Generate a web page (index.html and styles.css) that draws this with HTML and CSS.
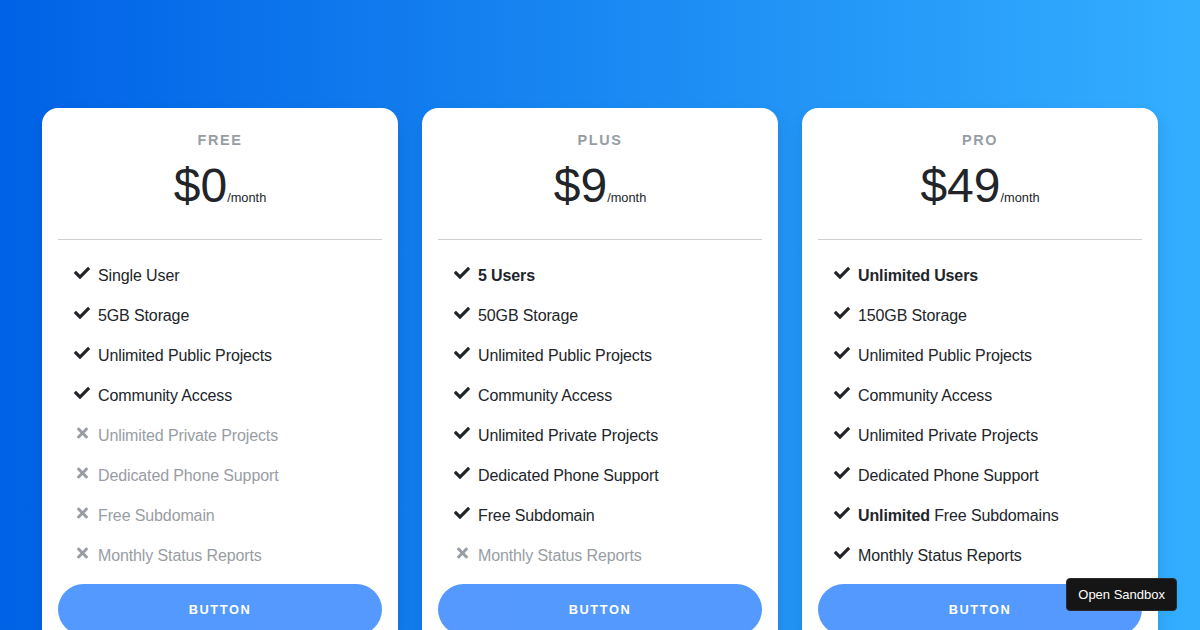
FILE: index.html
```html
<!DOCTYPE html>
<html lang="en">
<head>
<meta charset="utf-8">
<title>Pricing</title>
<link rel="stylesheet" href="styles.css">
</head>
<body>
<section class="pricing">
  <div class="row">
    <div class="card">
      <h5 class="card-title">Free</h5>
      <h6 class="card-price">$0<span class="period">/month</span></h6>
      <hr>
      <ul class="features">
        <li><span class="ico"><svg class="check" viewBox="0 0 512 512"><path d="M173.898 439.404l-166.4-166.4c-9.997-9.997-9.997-26.206 0-36.204l36.203-36.204c9.997-9.998 26.207-9.998 36.204 0L192 312.69 432.095 72.596c9.997-9.997 26.207-9.997 36.204 0l36.203 36.204c9.997 9.997 9.997 26.206 0 36.204l-294.4 294.401c-9.998 9.997-26.207 9.997-36.204-.001z"/></svg></span>Single User</li>
        <li><span class="ico"><svg class="check" viewBox="0 0 512 512"><path d="M173.898 439.404l-166.4-166.4c-9.997-9.997-9.997-26.206 0-36.204l36.203-36.204c9.997-9.998 26.207-9.998 36.204 0L192 312.69 432.095 72.596c9.997-9.997 26.207-9.997 36.204 0l36.203 36.204c9.997 9.997 9.997 26.206 0 36.204l-294.4 294.401c-9.998 9.997-26.207 9.997-36.204-.001z"/></svg></span>5GB Storage</li>
        <li><span class="ico"><svg class="check" viewBox="0 0 512 512"><path d="M173.898 439.404l-166.4-166.4c-9.997-9.997-9.997-26.206 0-36.204l36.203-36.204c9.997-9.998 26.207-9.998 36.204 0L192 312.69 432.095 72.596c9.997-9.997 26.207-9.997 36.204 0l36.203 36.204c9.997 9.997 9.997 26.206 0 36.204l-294.4 294.401c-9.998 9.997-26.207 9.997-36.204-.001z"/></svg></span>Unlimited Public Projects</li>
        <li><span class="ico"><svg class="check" viewBox="0 0 512 512"><path d="M173.898 439.404l-166.4-166.4c-9.997-9.997-9.997-26.206 0-36.204l36.203-36.204c9.997-9.998 26.207-9.998 36.204 0L192 312.69 432.095 72.596c9.997-9.997 26.207-9.997 36.204 0l36.203 36.204c9.997 9.997 9.997 26.206 0 36.204l-294.4 294.401c-9.998 9.997-26.207 9.997-36.204-.001z"/></svg></span>Community Access</li>
        <li class="muted"><span class="ico"><svg class="times" viewBox="0 0 352 512"><path d="M242.72 256l100.07-100.07c12.28-12.28 12.28-32.19 0-44.48l-22.24-22.24c-12.28-12.28-32.19-12.28-44.48 0L176 189.28 75.93 89.21c-12.28-12.28-32.19-12.28-44.48 0L9.21 111.45c-12.28 12.28-12.28 32.19 0 44.48L109.28 256 9.21 356.07c-12.28 12.28-12.28 32.19 0 44.48l22.24 22.24c12.28 12.28 32.2 12.28 44.48 0L176 322.72l100.07 100.07c12.28 12.28 32.2 12.28 44.48 0l22.24-22.24c12.28-12.28 12.28-32.19 0-44.48L242.72 256z"/></svg></span>Unlimited Private Projects</li>
        <li class="muted"><span class="ico"><svg class="times" viewBox="0 0 352 512"><path d="M242.72 256l100.07-100.07c12.28-12.28 12.28-32.19 0-44.48l-22.24-22.24c-12.28-12.28-32.19-12.28-44.48 0L176 189.28 75.93 89.21c-12.28-12.28-32.19-12.28-44.48 0L9.21 111.45c-12.28 12.28-12.28 32.19 0 44.48L109.28 256 9.21 356.07c-12.28 12.28-12.28 32.19 0 44.48l22.24 22.24c12.28 12.28 32.2 12.28 44.48 0L176 322.72l100.07 100.07c12.28 12.28 32.2 12.28 44.48 0l22.24-22.24c12.28-12.28 12.28-32.19 0-44.48L242.72 256z"/></svg></span>Dedicated Phone Support</li>
        <li class="muted"><span class="ico"><svg class="times" viewBox="0 0 352 512"><path d="M242.72 256l100.07-100.07c12.28-12.28 12.28-32.19 0-44.48l-22.24-22.24c-12.28-12.28-32.19-12.28-44.48 0L176 189.28 75.93 89.21c-12.28-12.28-32.19-12.28-44.48 0L9.21 111.45c-12.28 12.28-12.28 32.19 0 44.48L109.28 256 9.21 356.07c-12.28 12.28-12.28 32.19 0 44.48l22.24 22.24c12.28 12.28 32.2 12.28 44.48 0L176 322.72l100.07 100.07c12.28 12.28 32.2 12.28 44.48 0l22.24-22.24c12.28-12.28 12.28-32.19 0-44.48L242.72 256z"/></svg></span>Free Subdomain</li>
        <li class="muted"><span class="ico"><svg class="times" viewBox="0 0 352 512"><path d="M242.72 256l100.07-100.07c12.28-12.28 12.28-32.19 0-44.48l-22.24-22.24c-12.28-12.28-32.19-12.28-44.48 0L176 189.28 75.93 89.21c-12.28-12.28-32.19-12.28-44.48 0L9.21 111.45c-12.28 12.28-12.28 32.19 0 44.48L109.28 256 9.21 356.07c-12.28 12.28-12.28 32.19 0 44.48l22.24 22.24c12.28 12.28 32.2 12.28 44.48 0L176 322.72l100.07 100.07c12.28 12.28 32.2 12.28 44.48 0l22.24-22.24c12.28-12.28 12.28-32.19 0-44.48L242.72 256z"/></svg></span>Monthly Status Reports</li>
      </ul>
      <a class="btn" href="#">Button</a>
    </div>

    <div class="card">
      <h5 class="card-title">Plus</h5>
      <h6 class="card-price">$9<span class="period">/month</span></h6>
      <hr>
      <ul class="features">
        <li><span class="ico"><svg class="check" viewBox="0 0 512 512"><path d="M173.898 439.404l-166.4-166.4c-9.997-9.997-9.997-26.206 0-36.204l36.203-36.204c9.997-9.998 26.207-9.998 36.204 0L192 312.69 432.095 72.596c9.997-9.997 26.207-9.997 36.204 0l36.203 36.204c9.997 9.997 9.997 26.206 0 36.204l-294.4 294.401c-9.998 9.997-26.207 9.997-36.204-.001z"/></svg></span><strong>5 Users</strong></li>
        <li><span class="ico"><svg class="check" viewBox="0 0 512 512"><path d="M173.898 439.404l-166.4-166.4c-9.997-9.997-9.997-26.206 0-36.204l36.203-36.204c9.997-9.998 26.207-9.998 36.204 0L192 312.69 432.095 72.596c9.997-9.997 26.207-9.997 36.204 0l36.203 36.204c9.997 9.997 9.997 26.206 0 36.204l-294.4 294.401c-9.998 9.997-26.207 9.997-36.204-.001z"/></svg></span>50GB Storage</li>
        <li><span class="ico"><svg class="check" viewBox="0 0 512 512"><path d="M173.898 439.404l-166.4-166.4c-9.997-9.997-9.997-26.206 0-36.204l36.203-36.204c9.997-9.998 26.207-9.998 36.204 0L192 312.69 432.095 72.596c9.997-9.997 26.207-9.997 36.204 0l36.203 36.204c9.997 9.997 9.997 26.206 0 36.204l-294.4 294.401c-9.998 9.997-26.207 9.997-36.204-.001z"/></svg></span>Unlimited Public Projects</li>
        <li><span class="ico"><svg class="check" viewBox="0 0 512 512"><path d="M173.898 439.404l-166.4-166.4c-9.997-9.997-9.997-26.206 0-36.204l36.203-36.204c9.997-9.998 26.207-9.998 36.204 0L192 312.69 432.095 72.596c9.997-9.997 26.207-9.997 36.204 0l36.203 36.204c9.997 9.997 9.997 26.206 0 36.204l-294.4 294.401c-9.998 9.997-26.207 9.997-36.204-.001z"/></svg></span>Community Access</li>
        <li><span class="ico"><svg class="check" viewBox="0 0 512 512"><path d="M173.898 439.404l-166.4-166.4c-9.997-9.997-9.997-26.206 0-36.204l36.203-36.204c9.997-9.998 26.207-9.998 36.204 0L192 312.69 432.095 72.596c9.997-9.997 26.207-9.997 36.204 0l36.203 36.204c9.997 9.997 9.997 26.206 0 36.204l-294.4 294.401c-9.998 9.997-26.207 9.997-36.204-.001z"/></svg></span>Unlimited Private Projects</li>
        <li><span class="ico"><svg class="check" viewBox="0 0 512 512"><path d="M173.898 439.404l-166.4-166.4c-9.997-9.997-9.997-26.206 0-36.204l36.203-36.204c9.997-9.998 26.207-9.998 36.204 0L192 312.69 432.095 72.596c9.997-9.997 26.207-9.997 36.204 0l36.203 36.204c9.997 9.997 9.997 26.206 0 36.204l-294.4 294.401c-9.998 9.997-26.207 9.997-36.204-.001z"/></svg></span>Dedicated Phone Support</li>
        <li><span class="ico"><svg class="check" viewBox="0 0 512 512"><path d="M173.898 439.404l-166.4-166.4c-9.997-9.997-9.997-26.206 0-36.204l36.203-36.204c9.997-9.998 26.207-9.998 36.204 0L192 312.69 432.095 72.596c9.997-9.997 26.207-9.997 36.204 0l36.203 36.204c9.997 9.997 9.997 26.206 0 36.204l-294.4 294.401c-9.998 9.997-26.207 9.997-36.204-.001z"/></svg></span>Free Subdomain</li>
        <li class="muted"><span class="ico"><svg class="times" viewBox="0 0 352 512"><path d="M242.72 256l100.07-100.07c12.28-12.28 12.28-32.19 0-44.48l-22.24-22.24c-12.28-12.28-32.19-12.28-44.48 0L176 189.28 75.93 89.21c-12.28-12.28-32.19-12.28-44.48 0L9.21 111.45c-12.28 12.28-12.28 32.19 0 44.48L109.28 256 9.21 356.07c-12.28 12.28-12.28 32.19 0 44.48l22.24 22.24c12.28 12.28 32.2 12.28 44.48 0L176 322.72l100.07 100.07c12.28 12.28 32.2 12.28 44.48 0l22.24-22.24c12.28-12.28 12.28-32.19 0-44.48L242.72 256z"/></svg></span>Monthly Status Reports</li>
      </ul>
      <a class="btn" href="#">Button</a>
    </div>

    <div class="card">
      <h5 class="card-title">Pro</h5>
      <h6 class="card-price">$49<span class="period">/month</span></h6>
      <hr>
      <ul class="features">
        <li><span class="ico"><svg class="check" viewBox="0 0 512 512"><path d="M173.898 439.404l-166.4-166.4c-9.997-9.997-9.997-26.206 0-36.204l36.203-36.204c9.997-9.998 26.207-9.998 36.204 0L192 312.69 432.095 72.596c9.997-9.997 26.207-9.997 36.204 0l36.203 36.204c9.997 9.997 9.997 26.206 0 36.204l-294.4 294.401c-9.998 9.997-26.207 9.997-36.204-.001z"/></svg></span><strong>Unlimited Users</strong></li>
        <li><span class="ico"><svg class="check" viewBox="0 0 512 512"><path d="M173.898 439.404l-166.4-166.4c-9.997-9.997-9.997-26.206 0-36.204l36.203-36.204c9.997-9.998 26.207-9.998 36.204 0L192 312.69 432.095 72.596c9.997-9.997 26.207-9.997 36.204 0l36.203 36.204c9.997 9.997 9.997 26.206 0 36.204l-294.4 294.401c-9.998 9.997-26.207 9.997-36.204-.001z"/></svg></span>150GB Storage</li>
        <li><span class="ico"><svg class="check" viewBox="0 0 512 512"><path d="M173.898 439.404l-166.4-166.4c-9.997-9.997-9.997-26.206 0-36.204l36.203-36.204c9.997-9.998 26.207-9.998 36.204 0L192 312.69 432.095 72.596c9.997-9.997 26.207-9.997 36.204 0l36.203 36.204c9.997 9.997 9.997 26.206 0 36.204l-294.4 294.401c-9.998 9.997-26.207 9.997-36.204-.001z"/></svg></span>Unlimited Public Projects</li>
        <li><span class="ico"><svg class="check" viewBox="0 0 512 512"><path d="M173.898 439.404l-166.4-166.4c-9.997-9.997-9.997-26.206 0-36.204l36.203-36.204c9.997-9.998 26.207-9.998 36.204 0L192 312.69 432.095 72.596c9.997-9.997 26.207-9.997 36.204 0l36.203 36.204c9.997 9.997 9.997 26.206 0 36.204l-294.4 294.401c-9.998 9.997-26.207 9.997-36.204-.001z"/></svg></span>Community Access</li>
        <li><span class="ico"><svg class="check" viewBox="0 0 512 512"><path d="M173.898 439.404l-166.4-166.4c-9.997-9.997-9.997-26.206 0-36.204l36.203-36.204c9.997-9.998 26.207-9.998 36.204 0L192 312.69 432.095 72.596c9.997-9.997 26.207-9.997 36.204 0l36.203 36.204c9.997 9.997 9.997 26.206 0 36.204l-294.4 294.401c-9.998 9.997-26.207 9.997-36.204-.001z"/></svg></span>Unlimited Private Projects</li>
        <li><span class="ico"><svg class="check" viewBox="0 0 512 512"><path d="M173.898 439.404l-166.4-166.4c-9.997-9.997-9.997-26.206 0-36.204l36.203-36.204c9.997-9.998 26.207-9.998 36.204 0L192 312.69 432.095 72.596c9.997-9.997 26.207-9.997 36.204 0l36.203 36.204c9.997 9.997 9.997 26.206 0 36.204l-294.4 294.401c-9.998 9.997-26.207 9.997-36.204-.001z"/></svg></span>Dedicated Phone Support</li>
        <li><span class="ico"><svg class="check" viewBox="0 0 512 512"><path d="M173.898 439.404l-166.4-166.4c-9.997-9.997-9.997-26.206 0-36.204l36.203-36.204c9.997-9.998 26.207-9.998 36.204 0L192 312.69 432.095 72.596c9.997-9.997 26.207-9.997 36.204 0l36.203 36.204c9.997 9.997 9.997 26.206 0 36.204l-294.4 294.401c-9.998 9.997-26.207 9.997-36.204-.001z"/></svg></span><strong>Unlimited</strong> Free Subdomains</li>
        <li><span class="ico"><svg class="check" viewBox="0 0 512 512"><path d="M173.898 439.404l-166.4-166.4c-9.997-9.997-9.997-26.206 0-36.204l36.203-36.204c9.997-9.998 26.207-9.998 36.204 0L192 312.69 432.095 72.596c9.997-9.997 26.207-9.997 36.204 0l36.203 36.204c9.997 9.997 9.997 26.206 0 36.204l-294.4 294.401c-9.998 9.997-26.207 9.997-36.204-.001z"/></svg></span>Monthly Status Reports</li>
      </ul>
      <a class="btn" href="#">Button</a>
    </div>
  </div>
</section>
<a class="sandbox" href="#">Open Sandbox</a>
</body>
</html>
```

FILE: styles.css
```css
* { box-sizing: border-box; }

html, body {
  margin: 0;
  height: 100%;
  overflow: hidden;
}

body {
  font-family: "Liberation Sans", Arial, Helvetica, sans-serif;
  font-size: 16px;
  line-height: 1.5;
  color: #212529;
  background: linear-gradient(to right, #0062e6, #33aeff);
}

.pricing {
  padding-top: 108px;
}

.row {
  width: 1116px;
  margin: 0 auto;
  display: grid;
  grid-template-columns: repeat(3, 1fr);
  gap: 24px;
}

.card {
  background: #fff;
  border-radius: 16px;
  padding: 16px;
  box-shadow: 0 8px 16px 0 rgba(0, 0, 0, 0.1);
  display: flex;
  flex-direction: column;
}

.card-title {
  margin: 8px 0;
  font-size: 14.4px;
  line-height: 1.2;
  letter-spacing: 1.6px;
  font-weight: 700;
  text-transform: uppercase;
  text-align: center;
  color: #6c757d;
  opacity: 0.7;
}

.card-price {
  margin: 0;
  font-size: 48px;
  line-height: 1.2;
  font-weight: 400;
  text-align: center;
  color: #212529;
}

.period {
  font-size: 12.8px;
}

hr {
  margin: 24px 0;
  border: 0;
  border-top: 1px solid #cfd0d1;
  height: 0;
}

.features {
  list-style: none;
  margin: 0 0 0 40px;
  padding: 0;
}

.features li {
  position: relative;
  margin-bottom: 16px;
  letter-spacing: -0.12px;
}

.features li.muted {
  color: #6c757d;
  opacity: 0.7;
}

.features strong {
  font-weight: 700;
}

.ico {
  position: absolute;
  left: -32px;
  top: 0;
  width: 32px;
  height: 24px;
  display: flex;
  justify-content: center;
  padding-top: 1px;
}

.check {
  width: 16px;
  height: 16px;
  fill: #212529;
}

.times {
  width: 11px;
  height: 16px;
  fill: currentColor;
}

.btn {
  display: block;
  text-align: center;
  text-decoration: none;
  color: #fff;
  background: #0d6efd;
  opacity: 0.7;
  border-radius: 80px;
  padding: 16px;
  font-size: 12.8px;
  line-height: 1.5;
  letter-spacing: 1.6px;
  font-weight: 700;
  text-transform: uppercase;
}

.sandbox {
  position: fixed;
  right: 23px;
  bottom: 19px;
  background: #151515;
  color: #fff;
  text-decoration: none;
  font-family: "Liberation Sans", Arial, sans-serif;
  font-size: 13px;
  line-height: 1;
  padding: 9px 11px;
  border-radius: 4px;
  border: 1px solid #2a2a2a;
}
```
